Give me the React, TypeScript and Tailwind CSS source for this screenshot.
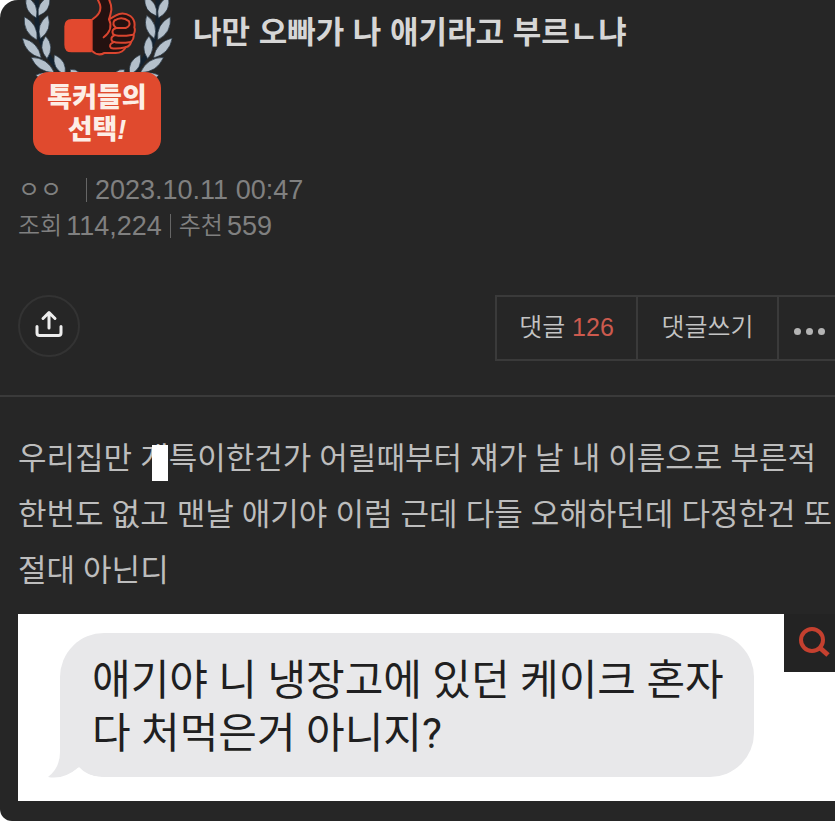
type LeafProps = { x1: number; y1: number; x2: number; y2: number };

// A pointed leaf drawn between two tips
function Leaf({ x1, y1, x2, y2 }: LeafProps) {
  const mx = (x1 + x2) / 2;
  const my = (y1 + y2) / 2;
  const len = Math.hypot(x2 - x1, y2 - y1);
  const nx = (-(y2 - y1) / len) * 27;
  const ny = ((x2 - x1) / len) * 27;
  return (
    <path
      d={`M${x1} ${y1}Q${mx + nx} ${my + ny} ${x2} ${y2}Q${mx - nx} ${my - ny} ${x1} ${y1}Z`}
    />
  );
}

const leaves: LeafProps[] = [
  { x1: 76, y1: -10, x2: 106, y2: 54 },
  { x1: 70, y1: 50, x2: 108, y2: 120 },
  { x1: 64, y1: 114, x2: 121, y2: 174 },
  { x1: 90, y1: 172, x2: 160, y2: 218 },
  { x1: 104, y1: 225, x2: 174, y2: 240 },
  { x1: 146, y1: -10, x2: 112, y2: 48 },
  { x1: 141, y1: 46, x2: 118, y2: 116 },
  { x1: 134, y1: 108, x2: 138, y2: 176 },
  { x1: 160, y1: 164, x2: 192, y2: 224 },
  { x1: 208, y1: 208, x2: 240, y2: 244 },
];

function Laurel() {
  return (
    <g>
      <path d="M108 0Q92 150 210 240" fill="none" stroke="#14222f" strokeWidth="14" />
      <g fill="#b4c0cb" stroke="#1b2a38" strokeWidth="2">
        {leaves.map((leaf, index) => (
          <Leaf key={index} {...leaf} />
        ))}
      </g>
    </g>
  );
}

function Badge() {
  return (
    <div className="flex w-[152px] shrink-0 flex-col items-center">
      <svg viewBox="60 0 456 240" className="h-20 w-full" aria-hidden="true">
        <Laurel />
        <g transform="translate(578 0) scale(-1 1)">
          <Laurel />
        </g>
        <path d="M272 57H212Q190 57 190 80V134Q190 157 212 157H272Z" fill="#e2492f" />
        <g stroke="#d9452f" strokeWidth="6" strokeLinecap="round" strokeLinejoin="round">
          <path
            d="M272 60C292 46 302 34 297 14Q293 4 288 -6H322Q332 14 331 30Q329 44 324 58L345 46Q366 34 388 48Q404 60 400 82Q404 92 398 104Q400 116 390 126Q388 138 374 142Q366 158 344 159H310Q290 170 272 152Z"
            fill="#241110"
          />
          <path
            d="M324 58C334 78 326 98 308 112M340 62Q362 46 384 64Q390 78 374 84H346Q332 74 340 62M346 84Q330 88 336 102Q348 112 396 104M340 106Q326 112 334 124Q350 132 390 126M336 128Q322 134 330 144Q346 148 374 142"
            fill="none"
          />
        </g>
      </svg>
      <div className="-mt-2 flex h-[83px] w-32 flex-col items-center justify-center rounded-2xl bg-[#e04a2e] text-[27px] leading-8 font-black text-[#fdeee6]">
        <span className="whitespace-nowrap">톡커들의</span>
        <span className="whitespace-nowrap">
          선택<i>!</i>
        </span>
      </div>
    </div>
  );
}

function ShareIcon() {
  return (
    <svg
      viewBox="0 0 28 28"
      className="size-7"
      fill="none"
      stroke="#ededed"
      strokeWidth="3"
      strokeLinecap="round"
      strokeLinejoin="round"
      aria-hidden="true"
    >
      <path d="M14 18V3M8 8.500L14 2.500L20 8.500M2 16.500V23Q2 25.500 4.500 25.500H23.500Q26 25.500 26 23V16.500" />
    </svg>
  );
}

function Photo() {
  return (
    <figure className="relative mt-[17px] ml-[18px] bg-white pt-[19px] pr-[81px] pb-6 pl-[42px]">
      <div className="relative rounded-[44px] bg-[#e8e8ea] px-8 pt-[21px] pb-[17px] font-['Roboto','Noto_Sans_CJK_KR',sans-serif] text-[42px] leading-[53px] text-[#1f1f21]">
        <svg
          viewBox="0 0 60 50"
          className="absolute bottom-[-1px] left-[-12px] h-[50px] w-[60px]"
          aria-hidden="true"
        >
          <path d="M12 0V24Q12 40 0 49Q16 52 31 39Q42 49 58 49V0Z" fill="#e8e8ea" />
          <path d="M13 50Q24 46 31 39Q40 49 54 49V50Z" fill="#fff" />
        </svg>
        <p className="relative whitespace-nowrap">애기야 니 냉장고에 있던 케이크 혼자</p>
        <p className="relative whitespace-nowrap">다 처먹은거 아니지?</p>
      </div>
      <button
        type="button"
        aria-label="확대"
        className="absolute top-0 right-0 flex h-[58px] w-[51px] items-center justify-center bg-[#232323] pl-2"
      >
        <svg viewBox="0 0 32 32" className="size-8" fill="none" stroke="#c5402f" aria-hidden="true">
          <circle cx="14" cy="13" r="11" strokeWidth="4" />
          <path d="M21 20L30 28" strokeWidth="5" />
        </svg>
      </button>
    </figure>
  );
}

export default function App() {
  return (
    <div className="min-h-screen bg-white font-['Liberation_Sans','Noto_Sans_CJK_KR',sans-serif]">
      <article className="min-h-screen overflow-hidden rounded-tl-[18px] rounded-bl-[12px] bg-[#262626] pb-5 text-[#b9b9b9]">
        <header>
          <div className="flex gap-5 pl-[21px]">
            <Badge />
            <h1 className="pt-[11px] text-[31px] leading-[44px] font-bold text-[#d6d6d6]">
              나만 오빠가 나 애기라고 부르ㄴ냐
            </h1>
          </div>
          <div className="mt-[17px] pl-[18px] text-[27px] leading-9 text-[#808080]">
            <p className="flex items-center">
              <span className="w-16 text-2xl">ㅇㅇ</span>
              <span className="mr-2 ml-1 h-6 w-px bg-[#666]" />
              <time dateTime="2023-10-11T00:47">2023.10.11 00:47</time>
            </p>
            <p className="flex items-center">
              <span className="mr-1 text-2xl font-[350]">조회</span>
              <span>114,224</span>
              <span className="mx-2 h-6 w-px bg-[#666]" />
              <span className="mr-1 text-2xl font-[350]">추천</span>
              <span>559</span>
            </p>
          </div>
        </header>

        <div className="mt-[51px] flex items-start justify-between pl-[18px]">
          <button
            type="button"
            aria-label="공유"
            className="flex size-[62px] items-center justify-center rounded-full border-2 border-[#333] pb-1"
          >
            <ShareIcon />
          </button>
          <div className="flex h-[66px] border-y-2 border-l-2 border-[#3a3a3a] text-[25px] text-[#c4c4c4]">
            <button type="button" className="w-[141px] border-r-2 border-[#3a3a3a] font-[350]">
              댓글 <span className="font-normal text-[#cc5a4e]">126</span>
            </button>
            <button type="button" className="w-[141px] border-r-2 border-[#3a3a3a] font-[350]">
              댓글쓰기
            </button>
            <button
              type="button"
              aria-label="더보기"
              className="flex w-14 items-center gap-[5px] pt-1.5 pl-[15px]"
            >
              <span className="size-[7px] rounded-full bg-[#b4b4b4]" />
              <span className="size-[7px] rounded-full bg-[#b4b4b4]" />
              <span className="size-[7px] rounded-full bg-[#b4b4b4]" />
            </button>
          </div>
        </div>

        <hr className="mt-[34px] border-t-2 border-[#3a3a3a]" />

        <div className="mt-8 pl-[18px] font-['Noto_Sans','Noto_Sans_CJK_KR',sans-serif] text-[31px] leading-[56px] whitespace-nowrap text-[#bdbdbd]">
          <p>
            우리집만{" "}
            <span className="relative">
              개
              <span className="absolute top-[9px] right-px h-9 w-4 bg-white" />
            </span>
            특이한건가 어릴때부터 쟤가 날 내 이름으로 부른적
          </p>
          <p>한번도 없고 맨날 애기야 이럼 근데 다들 오해하던데 다정한건 또</p>
          <p>절대 아닌디</p>
        </div>

        <Photo />
      </article>
    </div>
  );
}
